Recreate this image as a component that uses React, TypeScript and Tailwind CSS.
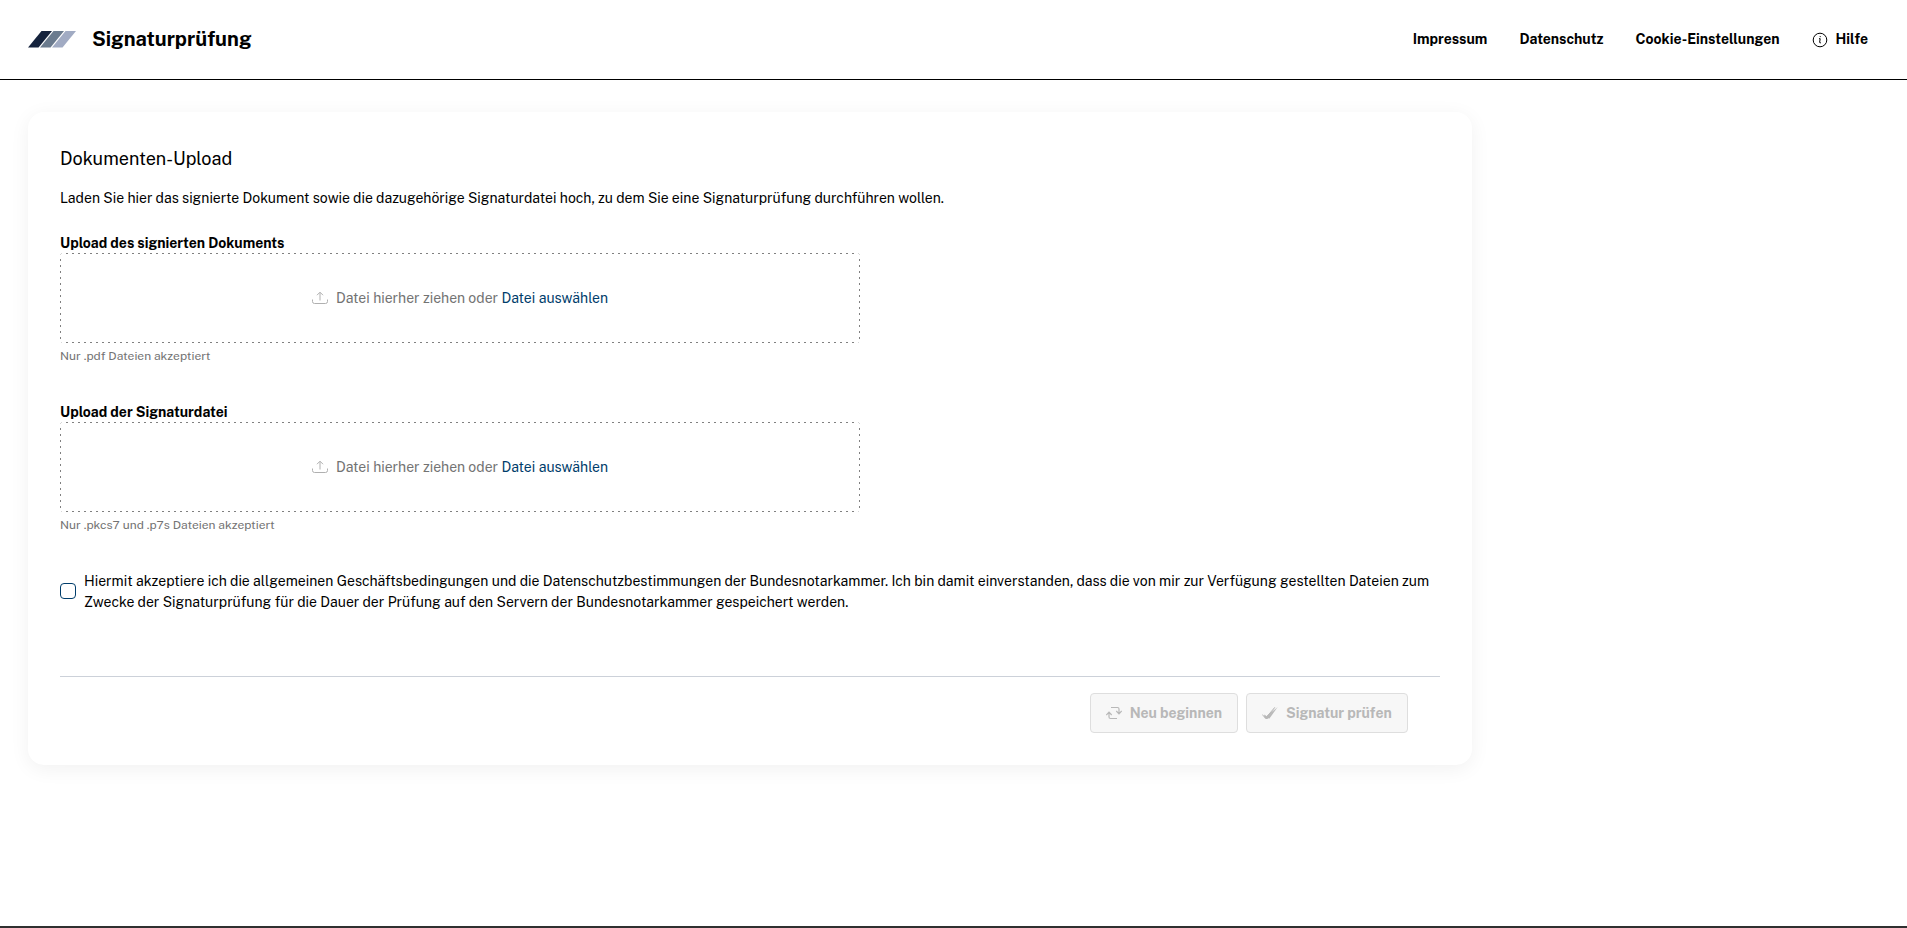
import { useState } from 'react'

const NAV_LINKS = ['Impressum', 'Datenschutz', 'Cookie-Einstellungen']

function Logo() {
  return (
    <svg width="48" height="18" viewBox="0 0 48 18" aria-hidden="true">
      <path d="M13.500 0H24L10.500 16.500H0Z" fill="#15233d" />
      <path d="M25.500 0H36L22.500 16.500H12Z" fill="#6b7b8e" />
      <path d="M37.500 0H48L34.500 16.500H24Z" fill="#a1abc3" />
    </svg>
  )
}

function InfoIcon() {
  return (
    <svg width="16" height="16" viewBox="0 0 16 16" fill="none" stroke="currentColor" aria-hidden="true">
      <circle cx="8" cy="8" r="6.8" />
      <path d="M7 6.700H8.200L7.600 10.400Q7.600 11 8.900 10.800" />
      <circle cx="8.200" cy="4.600" r="0.600" fill="currentColor" stroke="none" />
    </svg>
  )
}

function UploadIcon() {
  return (
    <svg width="16" height="16" viewBox="0 0 16 16" fill="none" stroke="#b0b0b0" aria-hidden="true">
      <path d="M0.500 9.500V11.500Q0.500 13.500 2.500 13.500H13.500Q15.500 13.500 15.500 11.500V9.500" />
      <path d="M8 10.500V2.500M5 5.200L8 2.200L11 5.200" />
    </svg>
  )
}

function RestartIcon() {
  return (
    <svg width="16" height="16" viewBox="0 0 16 16" fill="none" stroke="currentColor" strokeWidth="1.2" aria-hidden="true">
      <path d="M5 2.500H11.500Q13 2.500 13 4V8.500M10.300 6L13 8.800L15.700 6" />
      <path d="M11 13.500H4.500Q3 13.500 3 12V7.500M0.300 10L3 7.200L5.700 10" />
    </svg>
  )
}

function CheckIcon() {
  return (
    <svg width="16" height="16" viewBox="0 0 16 16" aria-hidden="true">
      <path d="M0.300 9.500L3.500 13.300L12.800 2.300" fill="none" stroke="currentColor" />
      <path d="M2.500 9.500L4.500 11.300L13.500 2.500L5.500 14H3.800L2 11.500Z" fill="currentColor" />
      <path d="M15.700 2L7.200 13.800L5.500 12.800L10 7.200Z" fill="currentColor" />
    </svg>
  )
}

interface UploadFieldProps {
  id: string
  label: string
  hint: string
  accept: string
}

function UploadField({ id, label, hint, accept }: UploadFieldProps) {
  const [fileName, setFileName] = useState('')

  return (
    <div className="flex max-w-[800px] flex-col">
      <span className="font-bold leading-5">{label}</span>
      {/* dashes are gradients: border-dashed spaces them too tightly */}
      <label
        htmlFor={id}
        className="flex h-[90px] cursor-pointer items-center justify-center gap-2 rounded bg-[image:repeating-linear-gradient(90deg,#808080_0_2px,transparent_2px_6px),repeating-linear-gradient(90deg,#808080_0_2px,transparent_2px_6px),repeating-linear-gradient(180deg,#808080_0_2px,transparent_2px_6px),repeating-linear-gradient(180deg,#808080_0_2px,transparent_2px_6px)] bg-[length:100%_1px,100%_1px,1px_100%,1px_100%] bg-[position:left_top,left_bottom,left_top,right_top] bg-no-repeat text-[#737373]"
      >
        <UploadIcon />
        <span>
          {fileName || 'Datei hierher ziehen oder'} <span className="text-[#003d6b]">Datei auswählen</span>
        </span>
        <input
          id={id}
          type="file"
          accept={accept}
          aria-label={label}
          className="sr-only"
          onChange={(e) => setFileName(e.target.files?.[0]?.name ?? '')}
        />
      </label>
      <p className="mt-1 text-xs leading-[18px] text-[#737373]">{hint}</p>
    </div>
  )
}

export default function App() {
  const [accepted, setAccepted] = useState(false)

  return (
    <div className="flex min-h-screen flex-col border-b-2 border-[#303030] bg-white font-['Public_Sans','Inter',sans-serif] text-sm leading-[21px] text-black">
      <header className="flex h-20 items-center justify-between border-b border-black pl-7 pr-[39px]">
        <div className="flex items-center gap-4">
          <Logo />
          <h1 className="pb-0.5 text-xl leading-6 font-bold">Signaturprüfung</h1>
        </div>
        <nav className="flex items-center gap-8 font-bold">
          {NAV_LINKS.map((link) => (
            <a key={link} href="#">{link}</a>
          ))}
          <a href="#" className="flex items-center gap-2">
            <InfoIcon />
            Hilfe
          </a>
        </nav>
      </header>

      <main className="flex-1 px-7 py-8">
        <form className="w-[78%] rounded-2xl bg-white px-8 pt-[33px] pb-8 shadow-[0_4px_20px_rgba(0,0,0,0.06)]">
          <h2 className="text-lg leading-[27px]">Dokumenten-Upload</h2>
          <p className="mt-4">
            Laden Sie hier das signierte Dokument sowie die dazugehörige Signaturdatei hoch, zu dem Sie eine Signaturprüfung durchführen wollen.
          </p>

          <div className="mt-6 flex flex-col gap-[37px]">
            <UploadField id="document" label="Upload des signierten Dokuments" hint="Nur .pdf Dateien akzeptiert" accept=".pdf" />
            <UploadField id="signature" label="Upload der Signaturdatei" hint="Nur .pkcs7 und .p7s Dateien akzeptiert" accept=".pkcs7,.p7s" />
          </div>

          <div className="mt-[35px] flex items-center gap-2">
            <input
              id="terms"
              type="checkbox"
              checked={accepted}
              onChange={(e) => setAccepted(e.target.checked)}
              className="size-4 shrink-0 appearance-none rounded border border-[#003d6b] bg-white checked:bg-[#003d6b]"
            />
            <label htmlFor="terms" className="pt-0.5">
              Hiermit akzeptiere ich die allgemeinen Geschäftsbedingungen und die Datenschutzbestimmungen der Bundesnotarkammer. Ich bin damit einverstanden, dass die von mir zur Verfügung gestellten Dateien zum Zwecke der Signaturprüfung für die Dauer der Prüfung auf den Servern der Bundesnotarkammer gespeichert werden.
            </label>
          </div>

          <div className="mt-[63px] flex justify-end gap-2 border-t border-[#ccd1d9] pr-8 pt-4 font-bold text-[#b8b8b8]">
            <button type="button" disabled className="flex h-10 items-center gap-2 rounded border border-[#dedede] bg-[#f7f7f7] px-[15px]">
              <RestartIcon />
              Neu beginnen
            </button>
            <button type="submit" disabled className="flex h-10 items-center gap-2 rounded border border-[#dedede] bg-[#f7f7f7] px-[15px]">
              <CheckIcon />
              Signatur prüfen
            </button>
          </div>
        </form>
      </main>
    </div>
  )
}
